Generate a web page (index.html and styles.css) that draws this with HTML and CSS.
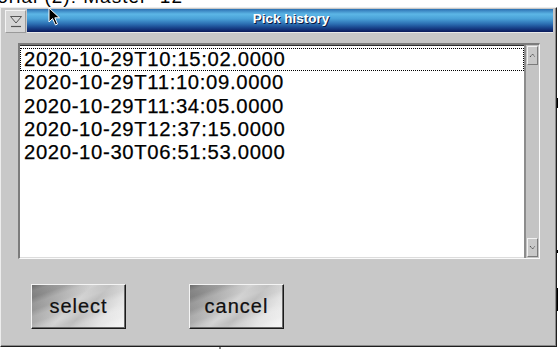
FILE: index.html
```html
<!DOCTYPE html>
<html lang="en">
<head>
    <meta charset="UTF-8">
    <title>Pick history</title>
    <link rel="stylesheet" href="styles.css">
</head>
<body>
    <div class="desk">
        <div class="behind">torial (2): Master&nbsp;&nbsp;12</div>
        <span class="mark m1"></span>
        <span class="mark m2"></span>
        <span class="mark m3"></span>
        <span class="mark m4"></span>

        <div class="win">
            <div class="titlerow">
                <div class="menubtn">
                    <svg width="14" height="13" viewBox="0 0 14 13">
                        <path d="M1.5 1.5 L12.5 1.5 L7 8 Z" fill="none" stroke="#555" stroke-width="1"/>
                        <path d="M2 11.5 L12 11.5" stroke="#555" stroke-width="1.2"/>
                    </svg>
                </div>
                <div class="titlebar">Pick history</div>
            </div>

            <div class="listframe">
                <ul class="list">
                    <li class="focus">2020-10-29T10:15:02.0000</li>
                    <li>2020-10-29T11:10:09.0000</li>
                    <li>2020-10-29T11:34:05.0000</li>
                    <li>2020-10-29T12:37:15.0000</li>
                    <li>2020-10-30T06:51:53.0000</li>
                </ul>
                <div class="scroll">
                    <div class="arrow">
                        <svg width="7" height="5" viewBox="0 0 7 5"><path d="M1 4 L3.5 1 L6 4" fill="none" stroke="#222" stroke-width="1" stroke-dasharray="1 1"/></svg>
                    </div>
                    <div class="trough"></div>
                    <div class="arrow">
                        <svg width="7" height="5" viewBox="0 0 7 5"><path d="M1 1 L3.5 4 L6 1" fill="none" stroke="#222" stroke-width="1" stroke-dasharray="1 1"/></svg>
                    </div>
                </div>
            </div>

            <div class="buttons">
                <button class="btn">select</button>
                <button class="btn">cancel</button>
            </div>
        </div>

        <svg class="cursor" width="14" height="20" viewBox="0 0 14 20">
            <path d="M1 1 L1 15 L4.5 11.5 L7.5 18 L9.5 17 L6.8 10.8 L11.5 10.8 Z" fill="#000" stroke="#fff" stroke-width="1"/>
        </svg>
    </div>
</body>
</html>
```

FILE: styles.css
```css
* {
    margin: 0;
    padding: 0;
    box-sizing: border-box;
    list-style: none;
}
body {
    background: #fff;
    overflow: hidden;
}
.desk {
    position: relative;
    width: 558px;
    height: 349px;
    overflow: hidden;
    font-family: "Liberation Sans", Arial, sans-serif;
}
.behind {
    position: absolute;
    left: -9px;
    top: -14px;
    font-size: 19px;
    letter-spacing: 1px;
    color: #000;
    white-space: nowrap;
}
.mark {
    position: absolute;
    background: #000;
}
.mark.m1 {
    left: 556px;
    top: 98px;
    width: 3px;
    height: 10px;
}
.mark.m2 {
    left: 556px;
    top: 250px;
    width: 3px;
    height: 3px;
}
.mark.m3 {
    left: 556px;
    top: 288px;
    width: 3px;
    height: 23px;
}
.mark.m4 {
    left: 219px;
    top: 346px;
    width: 2px;
    height: 3px;
    background: #888;
}

/* dialog window */
.win {
    position: absolute;
    left: 0;
    top: 7px;
    width: 557px;
    height: 340px;
    background: #c8c8c8;
    border-top: 1px solid #ededed;
    border-left: 1px solid #ededed;
    border-right: 1px solid #1e1e1e;
    border-bottom: 1px solid #1e1e1e;
    box-shadow: inset -1px -1px 0 #8a8a8a;
}
.titlerow {
    display: flex;
    gap: 1px;
    height: 25px;
    padding: 1px 3px 0 4px;
}
.menubtn {
    width: 21px;
    height: 23px;
    margin-top: 1px;
    display: flex;
    align-items: center;
    justify-content: center;
    background: #d6d6d6;
    border-top: 1px solid #f4f4f4;
    border-left: 1px solid #f4f4f4;
    border-right: 1px solid #9a9a9a;
    border-bottom: 1px solid #9a9a9a;
}
.titlebar {
    flex: 1;
    height: 24px;
    background: linear-gradient(#2c70b2 0%, #5cb6e6 22%, #4aa2d8 42%, #2a6cb0 66%, #163e86 84%, #0b1a5a 100%);
    border-bottom: 1px solid #e8e8e8;
    color: #fff;
    font-family: "Liberation Sans", Arial, sans-serif;
    font-weight: bold;
    font-size: 13.5px;
    line-height: 20px;
    text-align: center;
    text-shadow: 1px 1px 0 #0a1840;
    padding-left: 2px;
}

/* list with scrollbar */
.listframe {
    display: flex;
    width: 522px;
    height: 216px;
    margin: 10px 0 0 17px;
    border-top: 2px solid #7c7c7c;
    border-left: 2px solid #7c7c7c;
    border-right: 1px solid #fafafa;
    border-bottom: 1px solid #fafafa;
}
.list {
    flex: 1;
    background: #fff;
    padding-top: 2px;
    border-top: 1px solid #303030;
    border-bottom: 1px solid #dcdcdc;
}
.list li {
    height: 23.25px;
    padding-left: 4px;
    font-size: 20.3px;
    line-height: 23px;
    letter-spacing: 0.65px;
    -webkit-text-stroke: 0.25px #000;
    color: #000;
    white-space: nowrap;
}
.list li.focus {
    outline: 1px dotted #000;
    outline-offset: -1px;
}
.scroll {
    width: 15px;
    display: flex;
    flex-direction: column;
    background: #c4c4c4;
    border-left: 2px solid #8c8c8c;
    padding: 1px;
}
.arrow {
    height: 19px;
    display: flex;
    align-items: center;
    justify-content: center;
    background: #c8c8c8;
    border-top: 1px solid #f2f2f2;
    border-left: 1px solid #f2f2f2;
    border-right: 1px solid #7a7a7a;
    border-bottom: 1px solid #7a7a7a;
}
.trough {
    flex: 1;
}

/* buttons */
.buttons {
    display: flex;
    gap: 63px;
    padding: 25px 0 0 30px;
}
.btn {
    width: 95px;
    height: 45px;
    font-family: "Liberation Sans", Arial, sans-serif;
    font-size: 20px;
    letter-spacing: 1px;
    -webkit-text-stroke: 0.2px #000;
    color: #111;
    border-top: 1px solid #f4f4f4;
    border-left: 1px solid #f4f4f4;
    border-right: 1px solid #1a1a1a;
    border-bottom: 1px solid #1a1a1a;
    box-shadow: inset -1px -1px 0 #6a6a6a;
    background:
        repeating-linear-gradient(160deg, rgba(255,255,255,0) 0px, rgba(255,255,255,0.12) 6px, rgba(255,255,255,0) 12px),
        linear-gradient(135deg, #6a6a6a 0%, #9c9c9c 22%, #cfcfcf 45%, #bdbdbd 58%, #e4e4e4 78%, #f6f6f6 100%);
    padding-bottom: 1px;
}

.cursor {
    position: absolute;
    left: 48px;
    top: 7px;
}
```
